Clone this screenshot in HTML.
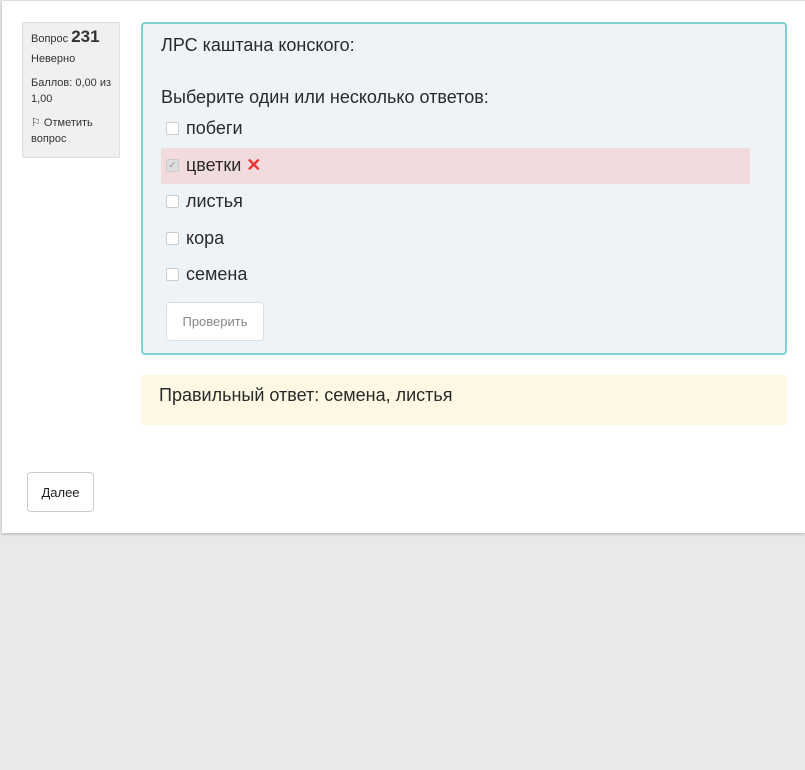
<!DOCTYPE html>
<html><head><meta charset="utf-8"><style>
body{margin:0;background:#e9e9e9;font-family:"Liberation Sans",sans-serif;color:#222;}
.card{position:absolute;left:2px;top:0;width:803px;height:533px;background:#fff;box-shadow:0 1px 3px rgba(0,0,0,.25);border-top:1px solid #ddd;box-sizing:border-box}
.info{position:absolute;left:20px;top:21px;width:98px;height:136px;background:#f0f0f0;border:1px solid #ddd;border-radius:2px;font-size:11px;color:#333;box-sizing:border-box;padding:6px 0 0 8px;line-height:16px}
.q{position:absolute;left:139px;top:21px;width:646px;height:333px;background:#edf3f6;border:2px solid #7fcfd6;border-radius:4px;box-sizing:border-box}
.t{position:absolute;font-size:18px;color:#2a2a2a;white-space:nowrap}
.cb{position:absolute;width:11px;height:11px;border:1px solid #ccc;border-radius:2px;background:#fff}
.btn{position:absolute;border:1px solid #ccc;border-radius:4px;background:#fff;font-size:13px;box-sizing:border-box;text-align:center}
</style></head><body>
<div class="card">
<div class="info"><div>Вопрос <b style="font-size:17px">231</b></div><div style="margin-top:4px">Неверно</div><div style="margin-top:8px">Баллов: 0,00 из 1,00</div><div style="margin-top:8px">⚐ Отметить вопрос</div></div>
<div class="q"></div>
<div style="position:absolute;left:159px;top:147px;width:589px;height:36px;background:#f2dbdc"></div>
<div class="t" style="left:159px;top:34px">ЛРС каштана конского:</div>
<div class="t" style="left:159px;top:86px">Выберите один или несколько ответов:</div>
<div class="cb" style="left:164px;top:121px"></div><div class="t" style="left:184px;top:117px">побеги</div>
<div class="cb" style="left:164px;top:158px;background:#ddd;color:#999;font-size:10px;line-height:11px;text-align:center">✓</div><div class="t" style="left:184px;top:154px">цветки <span style="color:#e33;font-weight:bold">✕</span></div>
<div class="cb" style="left:164px;top:194px"></div><div class="t" style="left:184px;top:190px">листья</div>
<div class="cb" style="left:164px;top:231px"></div><div class="t" style="left:184px;top:227px">кора</div>
<div class="cb" style="left:164px;top:267px"></div><div class="t" style="left:184px;top:263px">семена</div>
<div class="btn" style="left:164px;top:301px;width:98px;height:39px;line-height:38px;color:#888;border-color:#ddd">Проверить</div>
<div style="position:absolute;left:139px;top:374px;width:646px;height:50px;background:#fcf8e3;border-radius:3px"></div>
<div class="t" style="left:157px;top:384px">Правильный ответ: семена, листья</div>
<div class="btn" style="left:25px;top:471px;width:67px;height:40px;line-height:39px;color:#222">Далее</div>
</div>
</body></html>
